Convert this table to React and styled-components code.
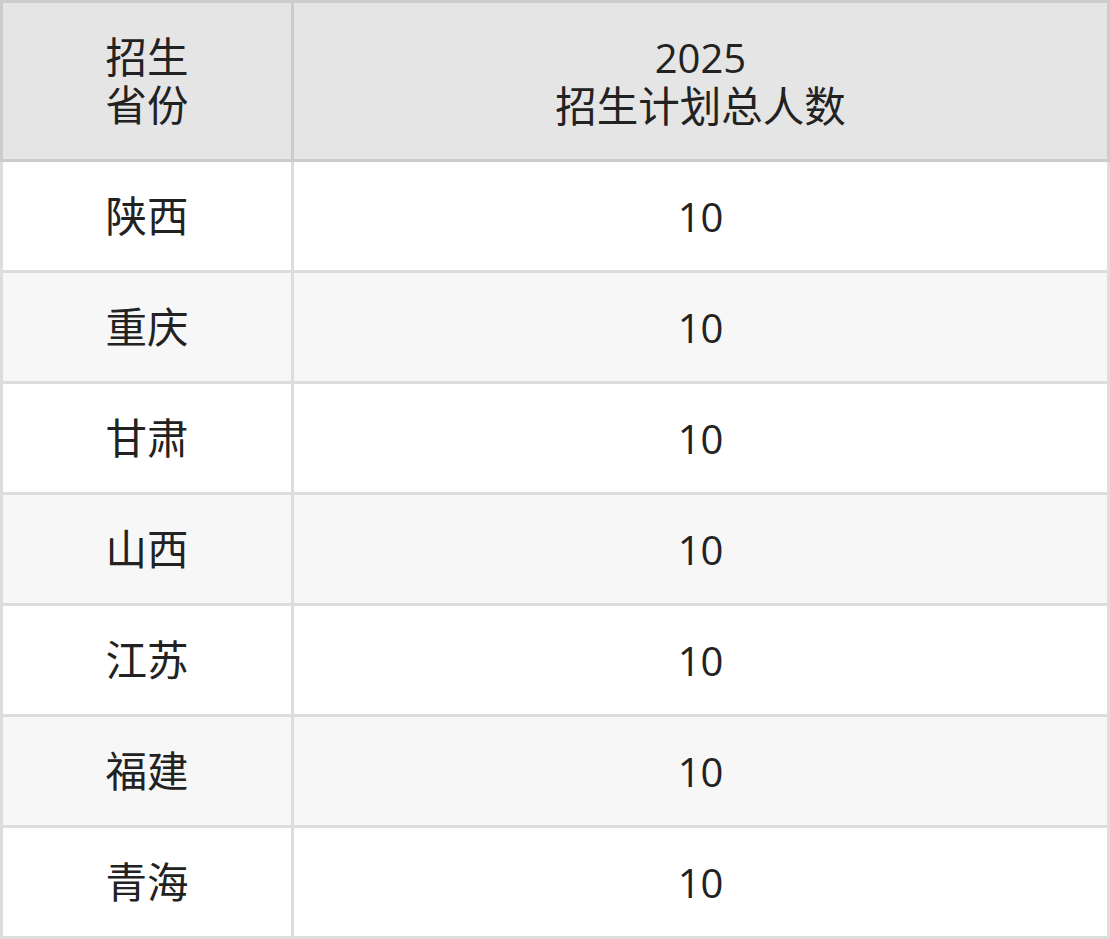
import React from 'react';
import styled, { createGlobalStyle } from 'styled-components';

const GlobalStyle = createGlobalStyle`
  html, body {
    margin: 0;
    padding: 0;
    background: #ffffff;
  }
  body {
    font-family: "Open Sans", "Noto Sans CJK SC", sans-serif;
    color: #222222;
  }
`;

const Table = styled.table`
  width: 1110px;
  table-layout: fixed;
  border-collapse: separate;
  border-spacing: 0;
  font-size: 41.5px;
  line-height: 48px;
`;

const HeadCell = styled.th`
  box-sizing: border-box;
  height: 162px;
  padding: 0;
  font-weight: normal;
  text-align: center;
  vertical-align: middle;
  background: #e5e5e5;
  border-top: 3px solid #cccccc;
  border-bottom: 3px solid #cccccc;
  border-right: 3px solid #cccccc;
  border-left: ${props => (props.first ? '3px solid #cccccc' : 'none')};
  width: ${props => (props.first ? '294px' : 'auto')};
`;

const Row = styled.tr`
  background: ${props => (props.striped ? '#f7f7f7' : '#ffffff')};
`;

const Cell = styled.td`
  box-sizing: border-box;
  height: 111px;
  padding: 0;
  text-align: center;
  vertical-align: middle;
  border-bottom: 3px solid #dddddd;
  border-right: 3px solid #dddddd;
  border-left: ${props => (props.first ? '3px solid #dddddd' : 'none')};
`;

const Num = styled.span`
  font-size: 40px;
`;

const rows = [
  { province: '陕西', total: 10 },
  { province: '重庆', total: 10 },
  { province: '甘肃', total: 10 },
  { province: '山西', total: 10 },
  { province: '江苏', total: 10 },
  { province: '福建', total: 10 },
  { province: '青海', total: 10 },
];

const App = () => (
  <>
    <GlobalStyle />
    <Table>
      <thead>
        <tr>
          <HeadCell first>
            招生
            <br />
            省份
          </HeadCell>
          <HeadCell>
            <Num>2025</Num>
            <br />
            招生计划总人数
          </HeadCell>
        </tr>
      </thead>
      <tbody>
        {rows.map((row, i) => (
          <Row key={row.province} striped={i % 2 === 1}>
            <Cell first>{row.province}</Cell>
            <Cell>
              <Num>{row.total}</Num>
            </Cell>
          </Row>
        ))}
      </tbody>
    </Table>
  </>
);

export default App;
